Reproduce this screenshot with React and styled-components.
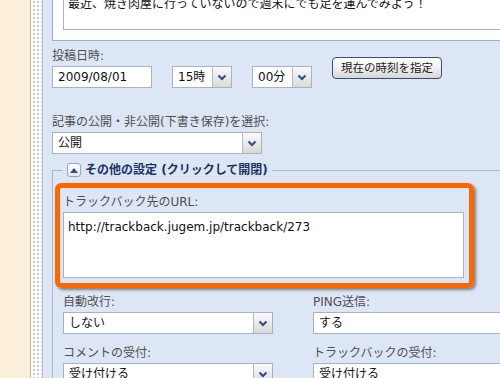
import React from 'react';
import styled, { createGlobalStyle } from 'styled-components';

const GlobalStyle = createGlobalStyle`
  html, body {
    margin: 0;
    padding: 0;
    width: 500px;
    height: 378px;
    overflow: hidden;
    background: #dde6f5;
  }
  * {
    box-sizing: border-box;
  }
`;

const FONT = `"DejaVu Sans", "Noto Sans CJK JP", sans-serif`;

const Page = styled.div`
  display: flex;
  width: 640px;
  height: 378px;
  font-family: ${FONT};
  font-size: 12px;
`;

const Sidebar = styled.div`
  width: 30px;
  flex: none;
  background: #fcefd9;
`;

const DottedStrip = styled.div`
  width: 13px;
  flex: none;
  border-left: 1px solid #bdb5a6;
  border-right: 1px solid #b7bfcf;
  background-color: #fbfbfb;
  background-image: radial-gradient(circle, #c9c9c9 0.7px, transparent 1.2px);
  background-size: 4px 4px;
  background-position: 1px 0;
`;

const Panel = styled.div`
  flex: 1;
  padding-left: 9px;
  background: #dde6f5;
`;

const TopBox = styled.div`
  margin-top: -20px;
  padding: 10px;
  border: 1px solid #8eb2e4;
  background: #fff;
`;

const TextArea = styled.div`
  border: 1px solid #a9b2c5;
  background: #fff;
  color: #111;
  padding: ${({ $pad }) => $pad || '3px 4px 16px'};
  line-height: 18px;
  height: ${({ $h }) => $h || 'auto'};
  white-space: nowrap;
`;

const Label = styled.div`
  color: #4f4f4f;
  line-height: 16px;
  margin-bottom: 2px;
  white-space: nowrap;
`;

const DateRow = styled.div`
  display: flex;
  align-items: center;
  margin-top: 7px;
`;

const Controls = styled.div`
  display: flex;
  gap: 20px;
`;

const Input = styled.div`
  width: ${({ $w }) => $w}px;
  height: 22px;
  border: 1px solid #a9b2c5;
  background: #fff;
  color: #111;
  padding: 0 5px;
  line-height: 20px;
`;

const SelectBox = styled.div`
  display: flex;
  width: ${({ $w }) => $w}px;
  height: 22px;
  border: 1px solid #a9b2c5;
  background: #fff;
`;

const SelectValue = styled.div`
  flex: 1;
  padding: 0 5px;
  line-height: 20px;
  color: #111;
  white-space: nowrap;
`;

const SelectArrow = styled.div`
  width: 19px;
  flex: none;
  display: flex;
  align-items: center;
  justify-content: center;
  border-left: 1px solid #b3b9c6;
  background: linear-gradient(#fafafa, #d9d9d9);
`;

const NowButton = styled.div`
  margin-left: 20px;
  width: 110px;
  height: 22px;
  border: 1px solid #3b4c70;
  border-radius: 4px;
  background: linear-gradient(#ffffff, #f0f0f0 50%, #d6d6d6);
  color: #222;
  font-size: 11.5px;
  line-height: 20px;
  text-align: center;
  white-space: nowrap;
`;

const Group = styled.div`
  margin-top: ${({ $mt }) => $mt || 0}px;
`;

const Fieldset = styled.fieldset`
  margin: 8px 0 0;
  padding: 0 0 0 2px;
  border: none;
  border-top: 1px solid #b2b5c9;
  border-left: 1px solid #b2b5c9;
  min-width: 0;
`;

const Legend = styled.legend`
  display: flex;
  align-items: center;
  gap: 4px;
  margin-left: 8px;
  padding: 0 4px;
  line-height: 16px;
  font-weight: bold;
  color: #1c3463;
`;

const ToggleIcon = styled.span`
  width: 14px;
  height: 14px;
  display: flex;
  align-items: center;
  justify-content: center;
  border: 1px solid #8ea6cf;
  border-radius: 3px;
  background: linear-gradient(#ffffff, #e3e9f4);
`;

const Highlight = styled.div`
  width: 419px;
  margin-top: 5px;
  padding: 6px 5px 5px 3px;
  border: 5px solid #ff6600;
  border-radius: 6px;
  box-shadow: 2px 2px 3px rgba(0, 0, 0, 0.45);
`;

const OptionGrid = styled.div`
  display: grid;
  grid-template-columns: 250px 250px;
  row-gap: 11px;
  margin-top: 6px;
  padding-left: 8px;
`;

const Chevron = () => (
  <svg width="10" height="7" viewBox="0 0 10 7">
    <path d="M1.5 1.5 L5 5 L8.5 1.5" fill="none" stroke="#2c4b8c" strokeWidth="2" />
  </svg>
);

const Select = ({ w, value }) => (
  <SelectBox $w={w}>
    <SelectValue>{value}</SelectValue>
    <SelectArrow>
      <Chevron />
    </SelectArrow>
  </SelectBox>
);

const options = [
  { label: '自動改行:', value: 'しない' },
  { label: 'PING送信:', value: 'する' },
  { label: 'コメントの受付:', value: '受け付ける' },
  { label: 'トラックバックの受付:', value: '受け付ける' },
];

export default function App() {
  return (
    <>
      <GlobalStyle />
      <Page>
        <Sidebar />
        <DottedStrip />
        <Panel>
          <TopBox>
            <TextArea>最近、焼き肉屋に行っていないので週末にでも足を運んでみよう！</TextArea>
          </TopBox>

          <DateRow>
            <div>
              <Label>投稿日時:</Label>
              <Controls>
                <Input $w={100}>2009/08/01</Input>
                <Select w={60} value="15時" />
                <Select w={60} value="00分" />
              </Controls>
            </div>
            <NowButton>現在の時刻を指定</NowButton>
          </DateRow>

          <Group $mt={26}>
            <Label>記事の公開・非公開(下書き保存)を選択:</Label>
            <Select w={210} value="公開" />
          </Group>

          <Fieldset>
            <Legend>
              <ToggleIcon>
                <svg width="8" height="5" viewBox="0 0 8 5">
                  <path d="M0 5 L4 0 L8 5 Z" fill="#2a4f9a" />
                </svg>
              </ToggleIcon>
              その他の設定 (クリックして開閉)
            </Legend>

            <Highlight>
              <Label>トラックバック先のURL:</Label>
              <TextArea $h="66px" $pad="5px 4px">
                http://trackback.jugem.jp/trackback/273
              </TextArea>
            </Highlight>

            <OptionGrid>
              {options.map((o) => (
                <div key={o.label}>
                  <Label>{o.label}</Label>
                  <Select w={210} value={o.value} />
                </div>
              ))}
            </OptionGrid>
          </Fieldset>
        </Panel>
      </Page>
    </>
  );
}
